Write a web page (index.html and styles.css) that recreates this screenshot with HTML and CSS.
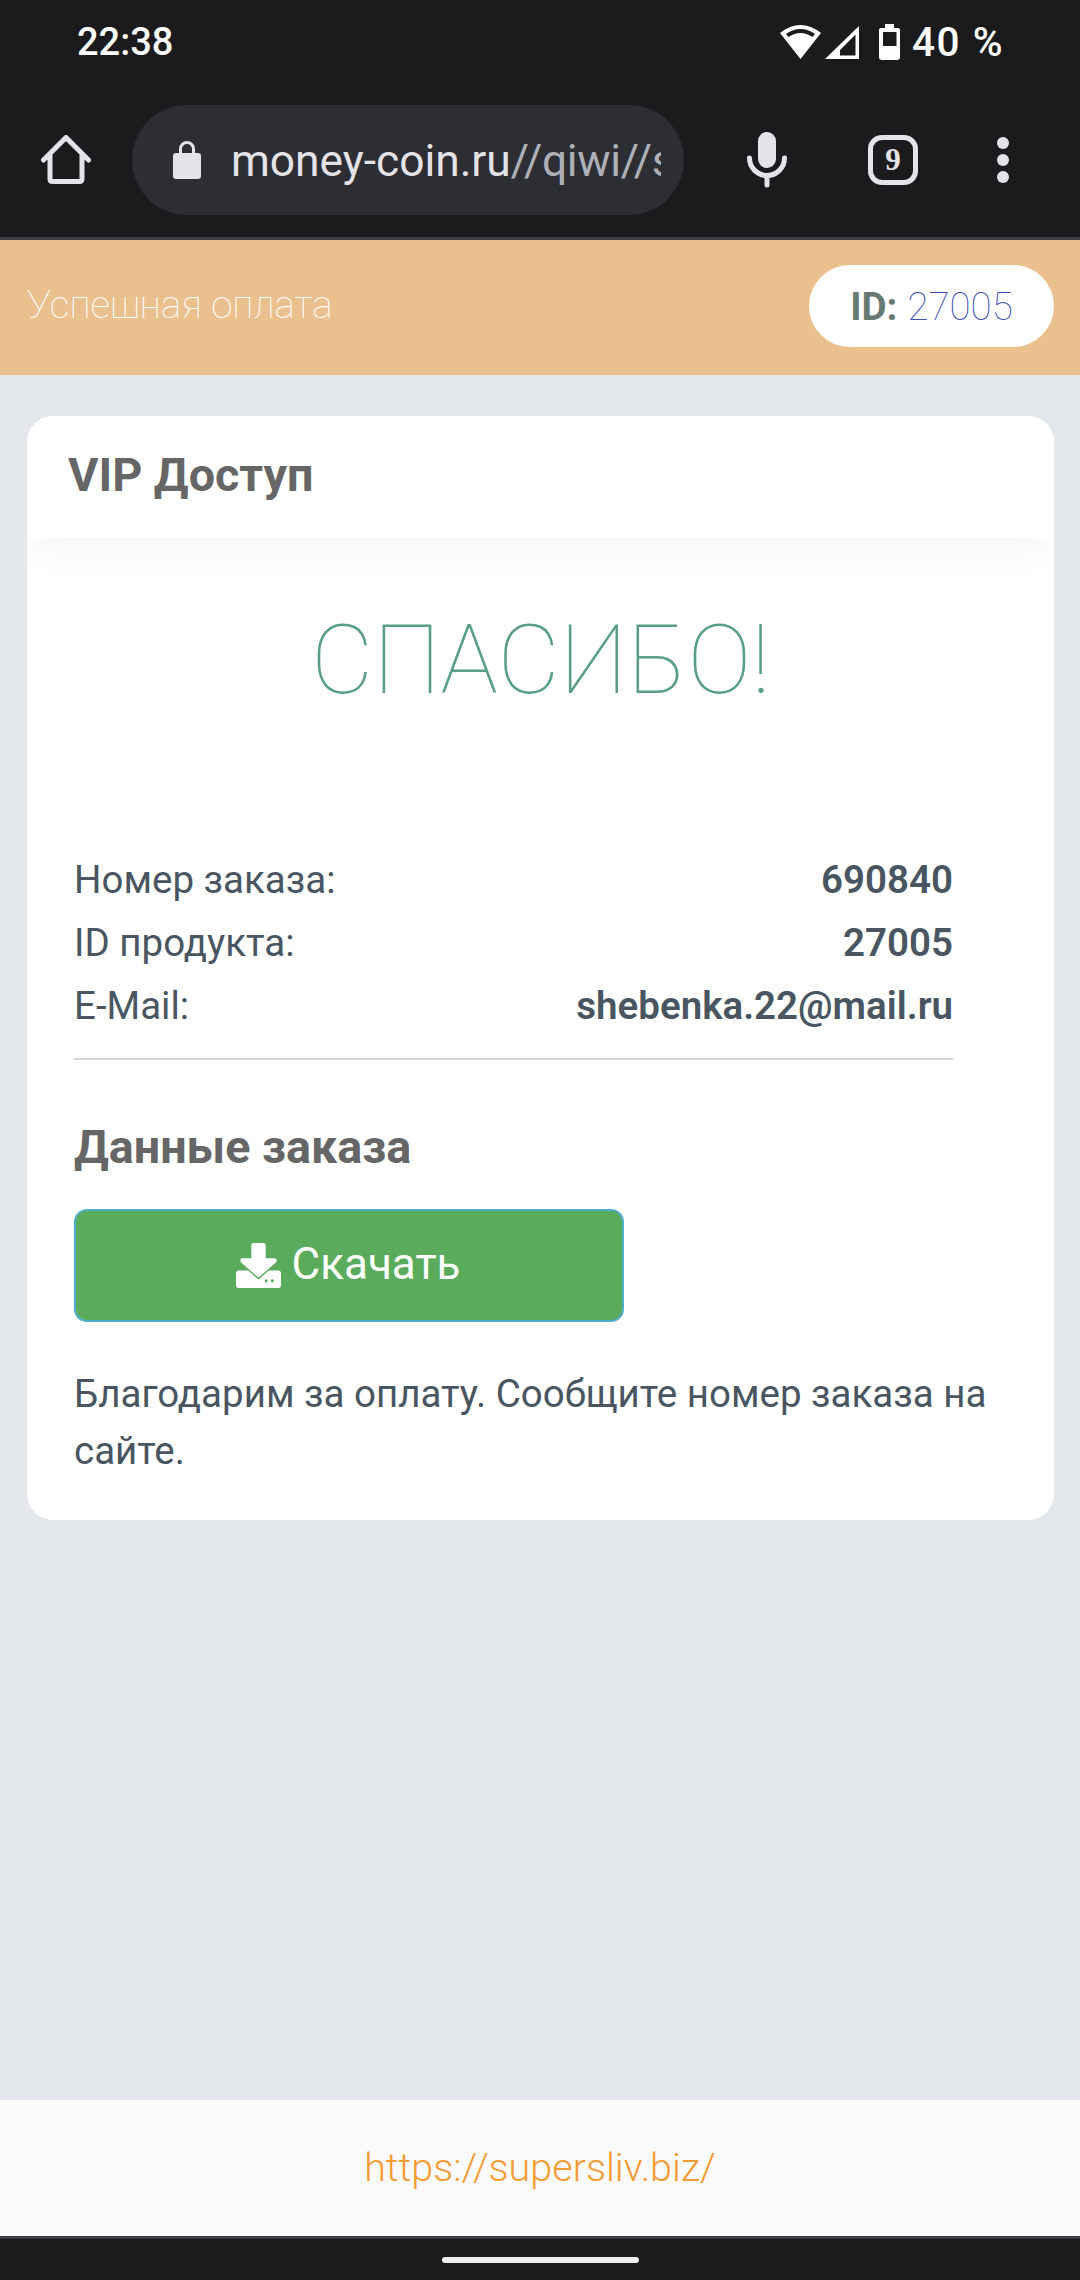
FILE: index.html
```html
<!DOCTYPE html>
<html lang="ru">
<head>
<meta charset="utf-8">
<title>Успешная оплата</title>
<link rel="stylesheet" href="styles.css">
</head>
<body>
<div class="app">
  <header class="chrome">
    <div class="status">
      <span class="clock">22:38</span>
      <div class="status-right">
        <svg class="i-wifi" width="41" height="34" viewBox="0 0 41 34"><path fill="#fff" fill-rule="evenodd" d="M20.500 34 0 8Q20.500-8 41 8zM6 9Q20.500-1 35 9L32.500 12Q20.500 4 8.500 12z"/></svg>
        <svg class="i-signal" width="34" height="33" viewBox="0 0 34 33"><path fill="#fff" fill-rule="evenodd" d="M34 0V33H0zM30.500 8.500 15 24V29.500H30.500z"/></svg>
        <svg class="i-batt" width="21" height="36" viewBox="0 0 21 36"><path fill="#fff" fill-rule="evenodd" d="M6 0H15V4H19Q21 4 21 6V33Q21 36 18 36H3Q0 36 0 33V6Q0 4 2 4H6zM4 8V22H17.500V8z"/></svg>
        <span class="pct">40 %</span>
      </div>
    </div>
    <div class="toolbar">
      <svg class="i-home" width="50" height="50" viewBox="0 0 50 50"><path fill="none" stroke="#e3e3e8" stroke-width="5" stroke-linecap="round" stroke-linejoin="round" d="M2.500 25 25 2.500 47.500 25M9 19V44Q9 46.500 11.500 46.500H38.500Q41 46.500 41 44V19"/></svg>
      <div class="omnibox">
        <svg class="i-lock" width="30" height="40" viewBox="0 0 30 40"><path fill="#e3e3e8" fill-rule="evenodd" d="M7 13V9a8 8 0 0 1 16 0v4h3q3 0 3 3v20q0 3-3 3H4q-3 0-3-3V16q0-3 3-3zM10 13h10V9a5 5 0 0 0-10 0z"/></svg>
        <div class="url"><span class="host">money-coin.ru</span><span class="path">//qiwi//s</span></div>
      </div>
      <svg class="i-mic" width="40" height="56" viewBox="0 0 40 56"><rect x="11" y="0" width="18" height="36" rx="9" fill="#e3e3e8"/><path fill="none" stroke="#e3e3e8" stroke-width="5" stroke-linecap="round" d="M2.500 26a17.500 17.500 0 0 0 35 0M20 44V53"/></svg>
      <div class="tabs">9</div>
      <div class="dots"><i></i><i></i><i></i></div>
    </div>
  </header>
  <div class="banner">
    <span class="banner-title">Успешная оплата</span>
    <span class="id-pill"><b>ID:</b> <span class="id-val">27005</span></span>
  </div>
  <main class="content">
    <section class="card">
      <h5 class="card-head">VIP Доступ</h5>
      <div class="card-body">
        <h1 class="thanks">СПАСИБО!</h1>
        <div class="rows">
          <div class="row"><span>Номер заказа:</span><b>690840</b></div>
          <div class="row"><span>ID продукта:</span><b>27005</b></div>
          <div class="row"><span>E-Mail:</span><b>shebenka.22@mail.ru</b></div>
        </div>
        <h4 class="order-title">Данные заказа</h4>
        <a class="btn">
          <svg class="i-dl" width="45" height="45" viewBox="0 0 44 44"><path fill="#fff" d="M17 0H27Q29 0 29 2V15H38Q41 16 39 19L23 33Q22 34 21 33L5 19Q3 16 6 15H15V2Q15 0 17 0z"/><path fill="#fff" fill-rule="evenodd" d="M0 30Q0 27 3 27H12L21 35Q22 36 23 35L32 27H41Q44 27 44 30V41Q44 44 41 44H3Q0 44 0 41zM31 37a1.500 1.500 0 1 0 0 .01zM37 37a1.500 1.500 0 1 0 0 .01z"/></svg>
          <span class="btn-text">Скачать</span>
        </a>
        <p class="note">Благодарим за оплату. Сообщите номер заказа на сайте.</p>
      </div>
    </section>
  </main>
  <footer class="foot"><a class="foot-link">https://supersliv.biz/</a></footer>
  <div class="navbar"><span class="handle"></span></div>
</div>
</body>
</html>
```
FILE: styles.css
```css
* { box-sizing: border-box; }
html, body { margin: 0; padding: 0; }
body { font-family: Roboto, "Liberation Sans", sans-serif; background: #e4e7ec; color: #495661; }
.app { width: 1080px; height: 2280px; display: flex; flex-direction: column; overflow: hidden; }

.chrome { height: 240px; background: #1b1b1d; border-bottom: 3px solid #3c3d44; flex: none; }
.status { height: 84px; display: flex; justify-content: space-between; align-items: center; padding: 0 76px 0 77px; color: #fff; }
.clock { font-size: 38px; font-weight: 500; }
.status-right { display: flex; align-items: center; }
.i-wifi { flex: none; margin-right: 4px; }
.i-signal { flex: none; margin-right: 20px; }
.i-batt { flex: none; margin-right: 12px; }
.pct { font-size: 40.500px; font-weight: 500; letter-spacing: 1.500px; }
.toolbar { height: 152px; display: flex; align-items: center; padding-left: 41px; }
.i-home { flex: none; }
.omnibox { width: 552px; height: 110px; margin-left: 41px; border-radius: 55px; background: #2d2e34; display: flex; align-items: center; padding-left: 40px; flex: none; }
.i-lock { flex: none; }
.url { width: 430px; margin: 2px 0 0 29px; overflow: hidden; white-space: nowrap; font-size: 44.300px; }
.host { color: #e3e3e8; }
.path { color: #aeb0b8; letter-spacing: -.3px; }
.i-mic { flex: none; margin-left: 63px; }
.tabs { flex: none; margin-left: 81px; width: 50px; height: 50px; border: 5px solid #e3e3e8; border-radius: 14px; color: #e3e3e8; font: 700 31px "Liberation Serif", serif; display: flex; align-items: center; justify-content: center; }
.dots { flex: none; margin-left: 79px; display: flex; flex-direction: column; gap: 5px; }
.dots i { display: block; width: 12px; height: 12px; border-radius: 50%; background: #e3e3e8; }

.banner { height: 135px; flex: none; background: #eac08e; display: flex; align-items: center; justify-content: space-between; padding: 0 26px 0 27px; }
.banner-title { font-size: 38.500px; font-weight: 100; color: #fff; margin-top: -6px; }
.id-pill { width: 245px; height: 82px; border-radius: 41px; background: #fff; display: flex; align-items: center; justify-content: center; gap: 10px; font-size: 38.500px; margin-top: -3px; }
.id-pill b { font-weight: 700; color: #677a72; }
.id-val { font-weight: 100; color: #3f51b5; }

.content { flex: 1; padding: 41px 26px 0 27px; }
.card { background: #fff; border-radius: 26px; height: 1104px; overflow: hidden; }
.card-head { margin: 0; height: 122px; padding: 30px 41px 0; font-size: 46.700px; font-weight: 700; color: #666; line-height: 58px; position: relative; background: #fff; box-shadow: 0 22px 32px -6px rgba(0, 0, 0, .04); }
.card-body { padding: 0 0 0 47px; }
.thanks { margin: 0; padding: 66px 47px 0 0; text-align: center; font-size: 96px; line-height: 113px; font-weight: 100; color: #5a9f84; }
.rows { margin-top: 131px; width: 879px; padding-bottom: 21px; border-bottom: 2px solid #d5d5d5; }
.row { display: flex; justify-content: space-between; height: 63px; line-height: 63px; font-size: 38.500px; }
.row b { font-weight: 600; }
.order-title { margin: 62px 0 0; font-size: 46.700px; line-height: 50px; font-weight: 700; color: #666; }
.btn { margin-top: 37px; width: 550px; height: 113px; background: #5bab5d; border: 2px solid #50afc8; border-radius: 13px; display: flex; align-items: center; justify-content: center; gap: 11px; color: #fff; font-size: 44px; }
.btn-text { margin: -3px 2px 0 0; }
.note { margin: 43px 0 0; width: 960px; font-size: 38.500px; line-height: 57px; }

.foot { height: 136px; flex: none; background: #fafafa; display: flex; align-items: center; justify-content: center; padding-bottom: 2px; }
.foot-link { font-size: 39.500px; font-weight: 300; color: #f39c34; }
.navbar { height: 44px; flex: none; background: #1b1b1d; border-top: 3px solid #3c3d44; display: flex; justify-content: center; padding-top: 18px; }
.handle { width: 197px; height: 6px; border-radius: 3px; background: #eee; }
```
